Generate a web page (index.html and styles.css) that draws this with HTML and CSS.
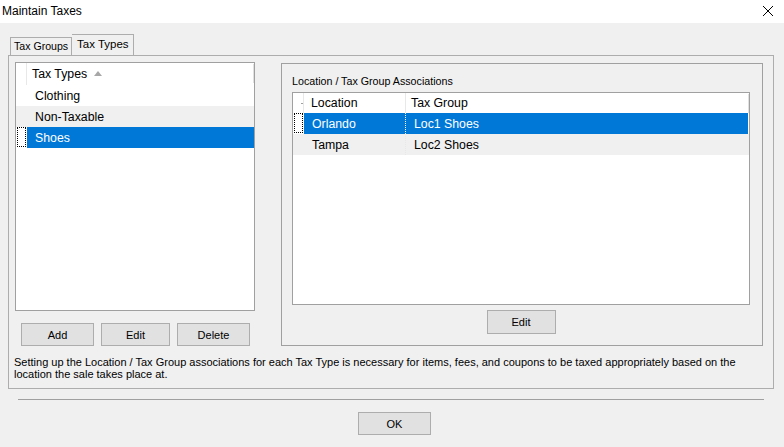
FILE: index.html
```html
<!DOCTYPE html>
<html lang="en">
<head>
  <meta charset="UTF-8">
  <title>Maintain Taxes</title>
  <link rel="stylesheet" href="styles.css">
</head>
<body>
  <div class="window">

    <div class="titlebar">
      <span class="title">Maintain Taxes</span>
      <svg class="close" width="12" height="12" viewBox="0 0 12 12">
        <path d="M1 1 L11 11 M11 1 L1 11" stroke="#000" stroke-width="1" fill="none"/>
      </svg>
    </div>

    <div class="content">
      <div class="tabs">
        <div class="tab">Tax Groups</div>
        <div class="tab active">Tax Types</div>
      </div>

      <div class="panel">
        <div class="top">

          <div class="leftcol">
            <div class="list">
              <div class="row head">
                <div class="ind"></div>
                <div class="cell">Tax Types <span class="sort"></span></div>
                <div class="endline"></div>
              </div>
              <div class="row">
                <div class="ind"></div>
                <div class="cell">Clothing</div>
              </div>
              <div class="row alt">
                <div class="ind"></div>
                <div class="cell">Non-Taxable</div>
              </div>
              <div class="row sel">
                <div class="ind"><div class="focus"></div></div>
                <div class="cell">Shoes</div>
              </div>
            </div>

            <div class="buttons">
              <button class="btn add">Add</button>
              <button class="btn edit">Edit</button>
              <button class="btn add">Delete</button>
            </div>
          </div>

          <div class="group">
            <div class="legend">Location / Tax Group Associations</div>
            <div class="grid">
              <div class="row head">
                <div class="ind"><span class="tick"></span></div>
                <div class="cell loc">Location</div>
                <div class="cell grp">Tax Group</div>
                <div class="endline"></div>
              </div>
              <div class="row sel">
                <div class="ind"><div class="focus"></div></div>
                <div class="cell loc">Orlando</div>
                <div class="cell grp">Loc1 Shoes</div>
              </div>
              <div class="row alt">
                <div class="ind"></div>
                <div class="cell loc">Tampa</div>
                <div class="cell grp">Loc2 Shoes</div>
              </div>
            </div>
            <div class="groupfoot">
              <button class="btn edit">Edit</button>
            </div>
          </div>

        </div>

        <p class="help">Setting up the Location / Tax Group associations for each Tax Type is necessary for items, fees, and coupons to be taxed appropriately based on the location the sale takes place at.</p>
      </div>

      <div class="separator"></div>

      <div class="footer">
        <button class="btn ok">OK</button>
      </div>
    </div>

  </div>
</body>
</html>
```

FILE: styles.css
```css
*
{
  box-sizing:border-box;
}

body
{
  margin:0;
  background-color:#f0f0f0;
  font-family:'Liberation Sans', Arial, sans-serif;
  color:#000;
}

div.window
{
  width:784px;
  height:447px;
  overflow:hidden;
}

div.titlebar
{
  height:23px;
  background-color:#fff;
  display:flex;
  align-items:center;
  justify-content:space-between;
  padding:0 10px 2px 2px;
  font-size:12px;
}

div.content
{
  padding-top:11px;
}

div.tabs
{
  display:flex;
  align-items:flex-end;
  height:21px;
  margin-left:10px;
}

div.tab
{
  width:62px;
  height:18px;
  border:1px solid #adadad;
  border-bottom:none;
  font-size:10.6px;
  padding-left:3px;
  line-height:17px;
  white-space:nowrap;
  overflow:hidden;
}

div.tab.active
{
  height:21px;
  border-left:none;
  padding-left:5px;
  font-size:11.5px;
  line-height:19px;
}

div.panel
{
  margin-left:8px;
  width:766px;
  height:334px;
  border:1px solid #adadad;
  padding:6px 10px 0 5px;
}

div.top
{
  display:flex;
  gap:26px;
}

div.leftcol
{
  width:240px;
  margin-left:1px;
}

div.list
{
  width:240px;
  height:249px;
  background-color:#fff;
  border:1px solid #a0a0a0;
}

div.row
{
  display:flex;
  height:21px;
  font-size:12.3px;
  align-items:stretch;
  position:relative;
}

div.list div.row.head
{
  height:22px;
}

div.grid div.row.head
{
  height:20px;
}

div.row.alt
{
  background-color:#f0f0f0;
}

div.ind
{
  width:11px;
  flex-shrink:0;
  position:relative;
  background-color:inherit;
}

div.row.head div.ind
{
  border-right:1px solid #e8e8e8;
}

div.cell
{
  display:flex;
  align-items:center;
  padding-left:8px;
  white-space:nowrap;
}

div.list div.cell
{
  flex:1;
}

div.list div.row.head div.cell
{
  padding-left:5px;
}

div.row.sel div.cell
{
  background-color:#0078d7;
  color:#fff;
}

div.focus
{
  position:absolute;
  left:1px;
  top:0;
  width:9px;
  height:20px;
  border:1px dotted #000;
}

span.sort
{
  display:inline-block;
  margin-left:7px;
  width:0;
  height:0;
  border-left:4px solid transparent;
  border-right:4px solid transparent;
  border-bottom:5px solid #a7a7a7;
  position:relative;
  top:-1px;
}

div.endline
{
  position:absolute;
  right:0;
  top:1px;
  width:1px;
  height:19px;
  background-color:#e0e0e0;
}

div.buttons
{
  display:flex;
  gap:7px;
  margin-top:12px;
  padding-left:6px;
}

button.btn
{
  font-family:'Liberation Sans', Arial, sans-serif;
  font-size:11px;
  background-color:#e1e1e1;
  border:1px solid #adadad;
  height:23px;
  width:73px;
  padding:0;
  color:#000;
}

button.edit
{
  width:69px;
}

div.group
{
  width:482px;
  height:283px;
  margin-top:1px;
  border:1px solid #a0a0a0;
  padding:10px 12px 0 10px;
}

div.legend
{
  font-size:10.7px;
  height:18px;
  line-height:14px;
}

div.grid
{
  width:458px;
  height:213px;
  background-color:#fff;
  border:1px solid #a0a0a0;
}

div.grid div.cell.loc
{
  width:101px;
}

div.grid div.cell.grp
{
  flex:1;
  border-left:1px dotted #e8e8e8;
  margin-right:1px;
}

div.grid div.row.head div.cell.loc
{
  padding-left:7px;
}

div.grid div.row.head div.cell.grp
{
  border-left:1px solid #e8e8e8;
  padding-left:5px;
}

div.grid div.row.sel div.cell.grp
{
  border-left:1px dotted #fff;
}

span.tick
{
  position:absolute;
  left:8px;
  top:10px;
  width:2px;
  height:1px;
  background-color:#a0a0a0;
}

div.groupfoot
{
  display:flex;
  justify-content:center;
  margin-top:5px;
}

div.groupfoot button.btn
{
  height:24px;
}

p.help
{
  margin:10px 0 0 0;
  font-size:11px;
  line-height:12px;
  width:740px;
}

div.separator
{
  margin:10px 0 0 18px;
  width:746px;
  height:1px;
  background-color:#a0a0a0;
}

div.footer
{
  display:flex;
  margin-top:12px;
  padding-left:358px;
}

button.ok
{
  height:23px;
}
```
